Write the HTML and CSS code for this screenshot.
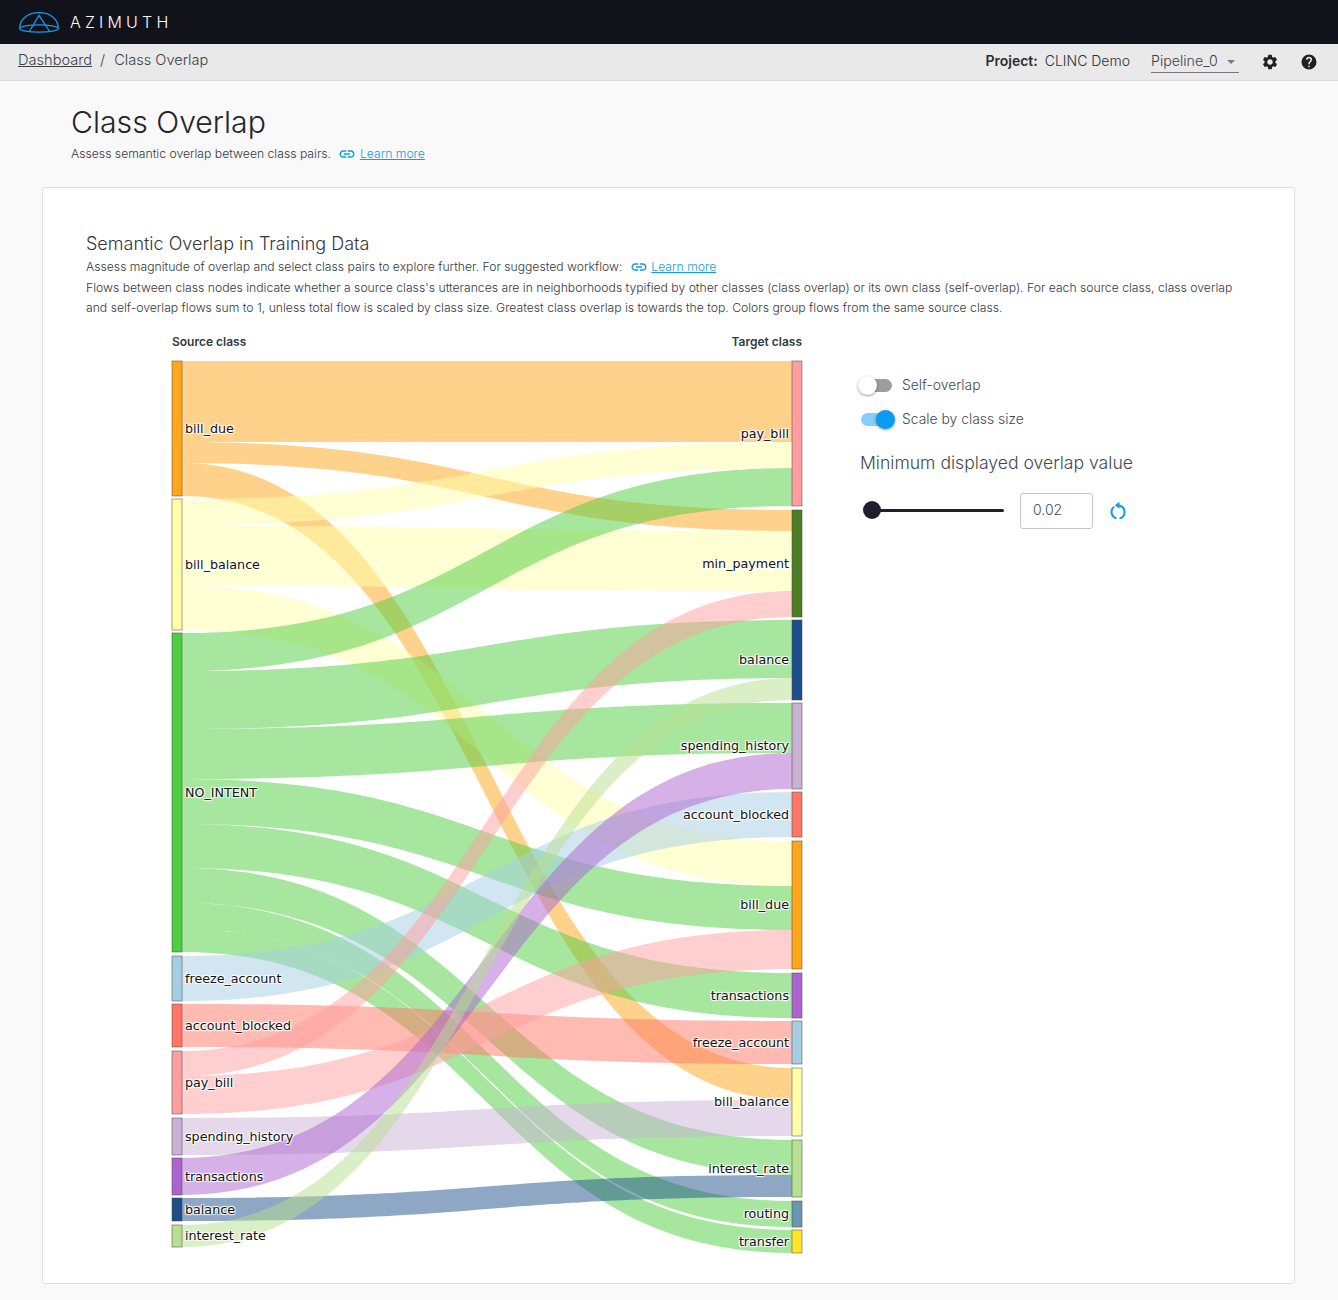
FILE: index.html
```html
<!DOCTYPE html>
<html lang="en">
<head>
    <meta charset="UTF-8">
    <meta name="viewport" content="width=device-width, initial-scale=1.0">
    <title>Class Overlap</title>
    <link rel="stylesheet" href="styles.css">
</head>
<body>
    <header class="topbar">
        <svg class="logo" viewBox="0 0 40 21" width="40" height="21" fill="none" stroke="#0f9bf0" stroke-width="1.3">
            <path d="M0.7 16.5C0.7 7 9 0.7 20 0.7C31 0.7 39.3 7 39.3 16.5"/>
            <ellipse cx="20" cy="16.5" rx="19.3" ry="3.7"/>
            <path d="M10 20L20 3.5L31 20"/>
        </svg>
        <span class="brand">AZIMUTH</span>
    </header>

    <nav class="subbar">
        <div class="crumbs">
            <a href="#" class="crumb-link">Dashboard</a>
            <span class="crumb-sep">/</span>
            <span>Class Overlap</span>
        </div>
        <div class="project">
            <b>Project:</b>
            <span class="project-name">CLINC Demo</span>
            <div class="pipeline">
                <span>Pipeline_0</span>
                <i class="caret"></i>
            </div>
            <svg class="bar-icon gear" viewBox="0 0 24 24" width="18" height="18">
                <path fill="#1f2023" d="M19.14 12.94c.04-.3.06-.61.06-.94 0-.32-.02-.64-.07-.94l2.03-1.58a.49.49 0 0 0 .12-.61l-1.92-3.32a.49.49 0 0 0-.59-.22l-2.39.96c-.5-.38-1.03-.7-1.62-.94l-.36-2.54a.48.48 0 0 0-.48-.41h-3.84a.47.47 0 0 0-.47.41l-.36 2.54c-.59.24-1.13.57-1.62.94l-2.39-.96a.48.48 0 0 0-.59.22L2.74 8.87a.47.47 0 0 0 .12.61l2.03 1.58c-.05.3-.09.63-.09.94s.02.64.07.94l-2.03 1.58a.49.49 0 0 0-.12.61l1.92 3.32c.12.22.37.29.59.22l2.39-.96c.5.38 1.03.7 1.62.94l.36 2.54c.05.24.24.41.48.41h3.84c.24 0 .44-.17.47-.41l.36-2.54c.59-.24 1.13-.56 1.62-.94l2.39.96c.22.08.47 0 .59-.22l1.92-3.32a.47.47 0 0 0-.12-.61l-2.01-1.58zM12 15.6A3.6 3.6 0 1 1 12 8.4a3.6 3.6 0 0 1 0 7.2z"/>
            </svg>
            <svg class="bar-icon help" viewBox="0 0 24 24" width="18" height="18">
                <path fill="#1f2023" d="M12 2a10 10 0 1 0 0 20 10 10 0 0 0 0-20zm1 17h-2v-2h2v2zm2.07-7.75-.9.92C13.45 12.9 13 13.5 13 15h-2v-.5c0-1.1.45-2.1 1.17-2.83l1.24-1.26c.37-.36.59-.86.59-1.41a2 2 0 0 0-4 0H8a4 4 0 0 1 8 0c0 .88-.36 1.68-.93 2.25z"/>
            </svg>
        </div>
    </nav>

    <main class="page">
        <h1 class="page-title">Class Overlap</h1>
        <p class="page-sub">
            Assess semantic overlap between class pairs.
            <a href="#" class="learn">
                <svg class="link-icon" viewBox="0 0 24 24" width="18" height="18"><path fill="#0f9bf0" d="M3.9 12c0-1.71 1.39-3.1 3.1-3.1h4V7H7c-2.76 0-5 2.24-5 5s2.24 5 5 5h4v-1.9H7c-1.71 0-3.1-1.39-3.1-3.1zM8 13h8v-2H8v2zm9-6h-4v1.9h4c1.71 0 3.1 1.39 3.1 3.1s-1.39 3.1-3.1 3.1h-4V17h4c2.76 0 5-2.24 5-5s-2.24-5-5-5z"/></svg>
                <span>Learn more</span>
            </a>
        </p>

        <section class="card">
            <h2 class="card-title">Semantic Overlap in Training Data</h2>
            <p class="card-text">
                Assess magnitude of overlap and select class pairs to explore further. For suggested workflow:
                <a href="#" class="learn">
                    <svg class="link-icon" viewBox="0 0 24 24" width="18" height="18"><path fill="#0f9bf0" d="M3.9 12c0-1.71 1.39-3.1 3.1-3.1h4V7H7c-2.76 0-5 2.24-5 5s2.24 5 5 5h4v-1.9H7c-1.71 0-3.1-1.39-3.1-3.1zM8 13h8v-2H8v2zm9-6h-4v1.9h4c1.71 0 3.1 1.39 3.1 3.1s-1.39 3.1-3.1 3.1h-4V17h4c2.76 0 5-2.24 5-5s-2.24-5-5-5z"/></svg>
                    <span>Learn more</span>
                </a>
            </p>
            <p class="card-text">Flows between class nodes indicate whether a source class's utterances are in neighborhoods typified by other classes (class overlap) or its own class (self-overlap). For each source class, class overlap and self-overlap flows sum to 1, unless total flow is scaled by class size. Greatest class overlap is towards the top. Colors group flows from the same source class.</p>

            <div class="chart-row">
                <div class="chart">
                    <div class="chart-heads">
                        <span>Source class</span>
                        <span>Target class</span>
                    </div>
                    <svg id="sankey" class="sankey" viewBox="172 361 630 893" width="630" height="893"></svg>
                </div>

                <div class="controls">
                    <label class="toggle-row">
                        <span class="toggle"><i class="thumb"></i></span>
                        <span>Self-overlap</span>
                    </label>
                    <label class="toggle-row">
                        <span class="toggle on"><i class="thumb"></i></span>
                        <span>Scale by class size</span>
                    </label>
                    <h3 class="controls-title">Minimum displayed overlap value</h3>
                    <div class="slider-row">
                        <div class="slider"><i class="slider-thumb"></i></div>
                        <div class="value-box">0.02</div>
                        <svg class="reset" viewBox="0 0 18 20" width="18" height="20" fill="none" stroke="#0f9bf0" stroke-width="2">
                            <path d="M10 4.5A6.6 6.6 0 0 1 10.5 17.4"/>
                            <path d="M7.5 17.4A6.6 6.6 0 0 1 5.2 5.7"/>
                            <path fill="#0f9bf0" stroke="none" d="M10.5 0.8V7.8L5.8 4.3Z"/>
                        </svg>
                    </div>
                </div>
            </div>
        </section>
    </main>

    <script src="sankey.js"></script>
</body>
</html>
```

FILE: styles.css
```css
* {
    box-sizing: border-box;
}
body {
    margin: 0;
    background-color: #f9f9f9;
    font-family: 'Inter', 'Noto Sans', sans-serif;
    font-weight: 300;
    color: #2b2d38;
}
a {
    color: inherit;
}

/* Top bars */
.topbar {
    height: 44px;
    padding-left: 19px;
    display: flex;
    align-items: center;
    background-color: #12121a;
}
.brand {
    margin-left: 11px;
    color: #fff;
    font-size: 16px;
    font-weight: 300;
    letter-spacing: 4.2px;
}
.subbar {
    height: 37px;
    padding: 0 20px 4px 18px;
    display: flex;
    align-items: center;
    justify-content: space-between;
    background-color: #e9e9e9;
    border-bottom: 1px solid #dcdcdc;
    font-size: 14px;
    color: #3c3f46;
}
.crumbs {
    display: flex;
    align-items: center;
    font-size: 14.6px;
}
.crumb-sep {
    margin: 0 9px 0 8px;
}
.project {
    display: flex;
    align-items: center;
    color: #2b2d38;
}
.project b {
    font-weight: 600;
}
.project-name {
    margin-left: 7px;
}
.pipeline {
    width: 88px;
    height: 24px;
    margin: 2px 22px 0 21px;
    display: flex;
    align-items: center;
    justify-content: space-between;
    padding-right: 4px;
    border-bottom: 1px solid #77797e;
    font-size: 14.2px;
    color: #3c3f46;
}
.caret {
    width: 0;
    height: 0;
    margin-top: 3px;
    border-left: 4px solid transparent;
    border-right: 4px solid transparent;
    border-top: 4px solid #77797e;
}
.bar-icon {
    margin-top: 3px;
}
.help {
    margin-left: 21px;
}

/* Page heading */
.page {
    padding: 0 43px 16px 42px;
}
.page-title {
    margin: 22px 0 0 29px;
    font-size: 30.2px;
    line-height: 38px;
    font-weight: 300;
    color: #23242e;
}
.page-sub {
    margin: 3px 0 23px 29px;
    font-size: 12.2px;
    line-height: 20px;
    color: #34363f;
}
.learn {
    margin-left: 4px;
    color: #0f9bf0;
    text-decoration: none;
}
.learn span {
    text-decoration: underline;
}
.link-icon {
    vertical-align: -5px;
}

/* Card */
.card {
    height: 1097px;
    padding: 43px 43px 0;
    background-color: #fff;
    border: 1px solid #e2e2e2;
    border-radius: 3px;
}
.card-title {
    margin: 0;
    font-size: 18px;
    line-height: 26px;
    font-weight: 300;
    color: #33353f;
}
.card-text {
    margin: 0;
    font-size: 12.2px;
    line-height: 20.5px;
    color: #34363f;
}

/* Chart */
.chart-row {
    margin-top: 13px;
    display: flex;
}
.chart {
    width: 630px;
    margin-left: 86px;
}
.chart-heads {
    height: 29px;
    display: flex;
    justify-content: space-between;
    font-size: 12px;
    line-height: 20px;
    font-weight: 600;
    color: #2f3b42;
}
.sankey {
    display: block;
    overflow: visible;
}
.sankey-label {
    font-family: 'DejaVu Sans', sans-serif;
    font-size: 12.7px;
    font-weight: 400;
    fill: #111;
    text-shadow: 1px 1px 1px #fff, -1px -1px 1px #fff, 1px -1px 1px #fff, -1px 1px 1px #fff;
}

/* Controls */
.controls {
    margin: 36px 0 0 58px;
    width: 300px;
}
.toggle-row {
    height: 34px;
    display: flex;
    align-items: center;
    font-size: 13.9px;
    color: #3f4a50;
}
.toggle {
    position: relative;
    width: 31px;
    height: 13px;
    margin: 2px 10px 0 1px;
    border-radius: 7px;
    background-color: #9e9e9e;
}
.toggle .thumb {
    position: absolute;
    left: -3px;
    top: -3px;
    width: 19px;
    height: 19px;
    border-radius: 50%;
    background-color: #fff;
    box-shadow: 0 1px 3px rgba(0,0,0,0.4);
}
.toggle.on {
    background-color: #85cdfb;
}
.toggle.on .thumb {
    left: 15px;
    background-color: #0a9bf5;
}
.controls-title {
    margin: 14px 0 0;
    font-size: 17.6px;
    line-height: 26px;
    font-weight: 300;
    color: #3f4a50;
}
.slider-row {
    margin-top: 17px;
    display: flex;
    align-items: center;
}
.slider {
    position: relative;
    width: 132px;
    height: 3px;
    margin-left: 12px;
    background-color: #1e1e2d;
    border-radius: 2px;
}
.slider-thumb {
    position: absolute;
    left: -9px;
    top: -8px;
    width: 18px;
    height: 18px;
    border-radius: 50%;
    background-color: #1e1e2d;
}
.value-box {
    width: 73px;
    height: 36px;
    margin-left: 16px;
    padding-left: 12px;
    border: 1px solid #c4c4c4;
    border-radius: 3px;
    font-size: 14px;
    line-height: 32px;
    color: #3f4a50;
}
.reset {
    margin-left: 16px;
}
```

FILE: sankey.js
```js
// Nodes: name, top, bottom, colour
var sources = [
    ['bill_due', 361, 496, '#ffa61a'],
    ['bill_balance', 499, 630, '#ffffa8'],
    ['NO_INTENT', 633, 952, '#4dce3f'],
    ['freeze_account', 956, 1001, '#a6cee3'],
    ['account_blocked', 1004, 1047, '#ff7666'],
    ['pay_bill', 1051, 1114, '#ff9e9e'],
    ['spending_history', 1118, 1155, '#cab2d6'],
    ['transactions', 1158, 1195, '#ac63d0'],
    ['balance', 1198, 1221, '#1c4f8a'],
    ['interest_rate', 1225, 1247, '#b8e090']
];
var targets = [
    ['pay_bill', 361, 506, '#ff9e9e'],
    ['min_payment', 510, 617, '#4e7d25'],
    ['balance', 620, 700, '#1c4f8a'],
    ['spending_history', 703, 789, '#cab2d6'],
    ['account_blocked', 792, 837, '#ff7666'],
    ['bill_due', 841, 969, '#ffa61a'],
    ['transactions', 973, 1018, '#ac63d0'],
    ['freeze_account', 1021, 1064, '#a6cee3'],
    ['bill_balance', 1068, 1136, '#ffffa8'],
    ['interest_rate', 1140, 1197, '#b8e090'],
    ['routing', 1201, 1227, '#6a96ae'],
    ['transfer', 1230, 1253, '#ffe629']
];

// Flows: source index, top and bottom at source, top and bottom at target
var flows = [
    [0, 361, 442, 361, 442],
    [0, 442, 463, 510, 531],
    [0, 463, 496, 1068, 1100],
    [1, 499, 525, 442, 468],
    [1, 526, 586, 531, 591],
    [1, 586, 630, 841, 886],
    [2, 633, 671, 468, 506],
    [2, 671, 729, 620, 678],
    [2, 729, 779, 703, 753],
    [2, 779, 824, 886, 930],
    [2, 824, 868, 973, 1018],
    [2, 868, 903, 1140, 1175],
    [2, 903, 929, 1201, 1227],
    [2, 929, 952, 1230, 1253],
    [3, 956, 1001, 792, 837],
    [4, 1004, 1047, 1021, 1064],
    [5, 1051, 1076, 591, 617],
    [5, 1076, 1114, 930, 969],
    [6, 1118, 1155, 1100, 1136],
    [7, 1158, 1195, 753, 789],
    [8, 1198, 1221, 1175, 1197],
    [9, 1225, 1247, 678, 700]
];

var svg = document.getElementById('sankey');
var NS = 'http://www.w3.org/2000/svg';
var x0 = 182, x1 = 792, mid = (x0 + x1) / 2;

function add(tag, attrs) {
    var el = document.createElementNS(NS, tag);
    for (var key in attrs) {
        el.setAttribute(key, attrs[key]);
    }
    svg.appendChild(el);
    return el;
}

flows.forEach(function (f) {
    var d = 'M' + x0 + ' ' + f[1] +
        'C' + mid + ' ' + f[1] + ' ' + mid + ' ' + f[3] + ' ' + x1 + ' ' + f[3] +
        'L' + x1 + ' ' + f[4] +
        'C' + mid + ' ' + f[4] + ' ' + mid + ' ' + f[2] + ' ' + x0 + ' ' + f[2] + 'Z';
    add('path', { d: d, fill: sources[f[0]][3], 'fill-opacity': 0.5 });
});

function drawNode(node, x) {
    add('rect', {
        x: x, y: node[1], width: 10, height: node[2] - node[1],
        fill: node[3], stroke: '#444', 'stroke-width': 1, 'stroke-opacity': 0.5
    });
}

function drawLabel(node, x, anchor) {
    var t = add('text', { x: x, y: (node[1] + node[2]) / 2 + 4, 'text-anchor': anchor, 'class': 'sankey-label' });
    t.textContent = node[0];
}

sources.forEach(function (n) { drawNode(n, 172); });
targets.forEach(function (n) { drawNode(n, 792); });
sources.forEach(function (n) { drawLabel(n, 185, 'start'); });
targets.forEach(function (n) { drawLabel(n, 789, 'end'); });
```
